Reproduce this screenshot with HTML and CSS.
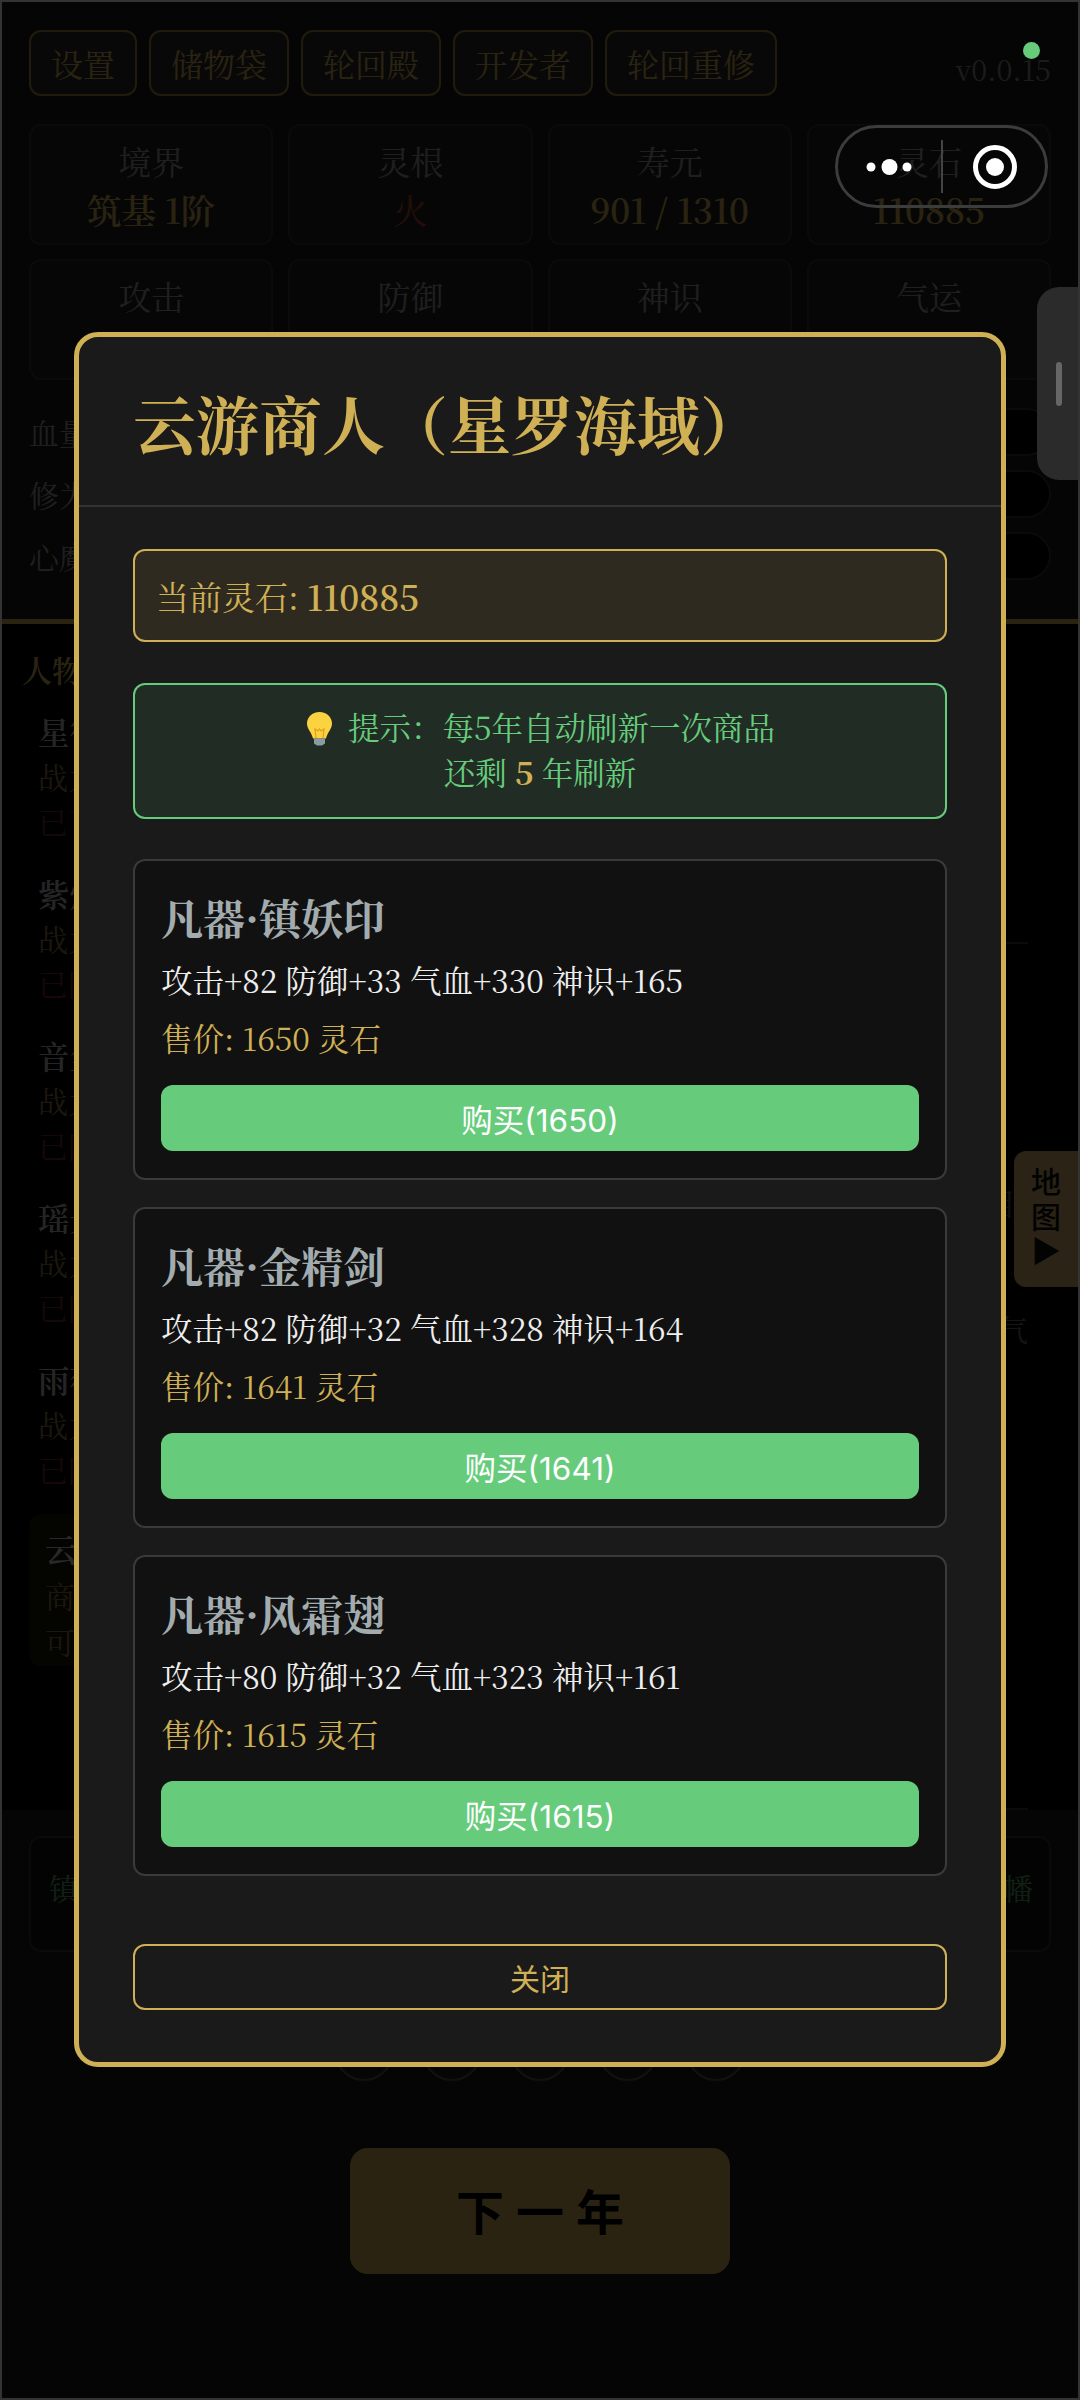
FILE: index.html
```html
<!doctype html>
<html lang="zh">
<head>
  <meta charset="utf-8">
  <title>修仙</title>
  <meta name="viewport" content="width=device-width, initial-scale=1">
  <link rel="stylesheet" href="styles.css">
</head>
<body>
<div class="frame">
  <div class="game">
    <div class="topbar">
      <div class="tabs">
        <button class="tab">设置</button>
        <button class="tab">储物袋</button>
        <button class="tab">轮回殿</button>
        <button class="tab">开发者</button>
        <button class="tab">轮回重修</button>
      </div>
      <span class="version">v0.0.15</span>
    </div>

    <div class="stats">
      <div class="stat"><span class="stat-label">境界</span><span class="stat-value">筑基 1阶</span></div>
      <div class="stat"><span class="stat-label">灵根</span><span class="stat-value fire">火</span></div>
      <div class="stat"><span class="stat-label">寿元</span><span class="stat-value">901 / 1310</span></div>
      <div class="stat"><span class="stat-label">灵石</span><span class="stat-value">110885</span></div>
      <div class="stat"><span class="stat-label">攻击</span><span class="stat-value">82</span></div>
      <div class="stat"><span class="stat-label">防御</span><span class="stat-value">33</span></div>
      <div class="stat"><span class="stat-label">神识</span><span class="stat-value">165</span></div>
      <div class="stat"><span class="stat-label">气运</span><span class="stat-value">12</span></div>
    </div>

    <div class="meters">
      <div class="meter"><span class="meter-label">血量</span><div class="meter-track"></div></div>
      <div class="meter"><span class="meter-label">修为</span><div class="meter-track"></div></div>
      <div class="meter"><span class="meter-label">心魔</span><div class="meter-track"></div></div>
    </div>

    <div class="main">
      <div class="people">
        <div class="people-title">人物</div>
        <div class="person"><div class="person-name">星衍</div><div class="person-info">战力 320</div><div class="person-dead">已飞升</div></div>
        <div class="person"><div class="person-name">紫烟</div><div class="person-info">战力 295</div><div class="person-dead">已陨落</div></div>
        <div class="person"><div class="person-name">音尘</div><div class="person-info">战力 274</div><div class="person-dead">已陨落</div></div>
        <div class="person"><div class="person-name">瑶光</div><div class="person-info">战力 260</div><div class="person-dead">已陨落</div></div>
        <div class="person"><div class="person-name">雨薇</div><div class="person-info">战力 248</div><div class="person-dead">已陨落</div></div>
        <div class="merchant">
          <div class="merchant-name">云游商人</div>
          <div class="merchant-line">商品</div>
          <div class="merchant-line">可购买</div>
        </div>
      </div>
      <div class="scene">
        <div class="scene-part first"></div>
        <div class="scene-part middle"><span class="scene-small">目</span><span class="scene-text">元气</span></div>
      </div>
    </div>

    <div class="slots">
      <span class="slot">镇</span>
      <span class="slot">幡</span>
    </div>

    <div class="dots">
      <span class="dot"></span><span class="dot"></span><span class="dot"></span><span class="dot"></span><span class="dot"></span>
    </div>

    <button class="next">下一年</button>
  </div>

  <div class="dim"></div>

  <div class="dock">
    <span class="dock-handle"></span>
  </div>
  <div class="map-tab">地<br>图<br>▶</div>
  <span class="online"></span>
  <div class="capsule">
    <svg class="capsule-more" width="70" height="30" viewBox="0 0 70 30"><circle cx="9" cy="15" r="4.5"/><circle cx="27.5" cy="15" r="8"/><circle cx="45" cy="15" r="4.5"/></svg>
    <span class="capsule-line"></span>
    <svg class="capsule-target" width="46" height="46" viewBox="0 0 46 46"><circle cx="23" cy="23" r="19.5" fill="none" stroke="#fff" stroke-width="5"/><circle cx="23" cy="23" r="9" fill="#fff"/></svg>
  </div>

  <div class="modal">
    <div class="modal-head">云游商人（星罗海域）</div>
    <div class="modal-body">
      <div class="balance">当前灵石: <strong>110885</strong></div>
      <div class="tip">
        <svg class="bulb" width="29" height="35" viewBox="0 0 29 35">
          <path d="M14.5 1C7 1 2 6.500 2 12.500c0 5.500 4.500 8.500 6 15h13c1.500-6.500 6-9.500 6-15C27 6.500 22 1 14.500 1z" fill="#fbd341"/>
          <path d="M11 27l-1-9 3 2 1.500-2 1.500 2 3-2-1 9" fill="none" stroke="#e79b1c" stroke-width="1.200"/>
          <path d="M9 27.500h11v5l-3 2h-5l-3-2z" fill="#8c9aa5"/>
        </svg>
        提示：每5年自动刷新一次商品<br>还剩 <b>5</b> 年刷新
      </div>
      <div class="goods">
        <div class="good">
          <div class="good-name">凡器·镇妖印</div>
          <div class="good-attrs">攻击+82 防御+33 气血+330 神识+165</div>
          <div class="good-price">售价: 1650 灵石</div>
          <button class="buy">购买(1650)</button>
        </div>
        <div class="good">
          <div class="good-name">凡器·金精剑</div>
          <div class="good-attrs">攻击+82 防御+32 气血+328 神识+164</div>
          <div class="good-price">售价: 1641 灵石</div>
          <button class="buy">购买(1641)</button>
        </div>
        <div class="good">
          <div class="good-name">凡器·风霜翅</div>
          <div class="good-attrs">攻击+80 防御+32 气血+323 神识+161</div>
          <div class="good-price">售价: 1615 灵石</div>
          <button class="buy">购买(1615)</button>
        </div>
      </div>
      <button class="close">关闭</button>
    </div>
  </div>
</div>
</body>
</html>
```

FILE: styles.css
```css
:root {
  --gold: #d0b055;
  --green: #66cc7c;
  --serif: "Noto Serif CJK SC", "Liberation Serif", serif;
  --sans: "Noto Sans CJK SC", sans-serif;
}
* { box-sizing: border-box; }
html, body { margin: 0; padding: 0; background: #000; }
button { font: inherit; cursor: pointer; }

.frame {
  position: relative;
  width: 1080px; height: 2400px;
  border: 2px solid #333;
  overflow: hidden;
  font-family: var(--serif);
}

/* page behind the dialog */
.game {
  height: 100%;
  background: #1a1a1a;
  padding: 28px 27px 0;
  color: #aaa;
}
.topbar { display: flex; justify-content: space-between; align-items: center; }
.tabs { display: flex; gap: 12px; }
.tab {
  height: 66px; padding: 0 20px;
  background: #2a2a2a; color: var(--gold);
  border: 2px solid rgba(201, 168, 76, 0.75); border-radius: 12px;
  font-size: 32px; font-family: var(--serif);
}
.version { font-size: 28.500px; color: #888; position: relative; top: 5px; }

.stats {
  display: grid; grid-template-columns: repeat(4, 1fr); gap: 14px 15px;
  margin-top: 28px;
}
.stat {
  height: 121px; padding-top: 12px;
  background: #222; border: 2px solid #333; border-radius: 12px;
  display: flex; flex-direction: column; align-items: center;
}
.stat-label { font-size: 33px; line-height: 46px; color: #999; }
.stat-value { font-size: 34.500px; line-height: 50px; font-weight: 600; color: var(--gold); }
.stat-value.fire { color: #b04530; font-weight: 400; }

.meters { margin-top: 28px; display: flex; flex-direction: column; gap: 14px; }
.meter { display: flex; align-items: center; gap: 12px; height: 48px; }
.meter-label { font-size: 30px; width: 90px; color: #999; }
.meter-track { flex: 1; height: 48px; border-radius: 24px; background: #000; border: 2px solid #333; }

.main {
  display: flex; margin: 39px -27px 0;
  border-top: 5px solid var(--gold);
  height: 1191px;
}
.people { width: 600px; padding: 22px 22px 0 20px; background: #000; }
.people-title { font-size: 30px; font-weight: 600; color: var(--gold); line-height: 46px; }
.person { height: 162px; padding: 18px 0 0 16px; font-size: 30px; line-height: 45px; }
.person-name { font-weight: 600; color: #bbb; font-size: 31.500px; line-height: 44px; }
.person-info { color: #8a7640; }
.person-dead { color: #6e2a2a; }
.merchant {
  margin: 12px 0 0 7px; height: 152px; padding: 12px 16px;
  background: rgba(201, 168, 76, 0.12); border-radius: 12px;
  font-size: 30px; line-height: 46px;
}
.merchant-name { font-weight: 600; color: #ccc; font-size: 31.500px; }
.merchant-line { color: #8a7640; }

.scene { flex: 1; background: #000; padding-right: 50px; text-align: right; }
.scene-part.first { height: 318px; }
.scene-part.middle {
  height: 868px; border-top: 2px solid #333; border-bottom: 2px solid #333;
  display: flex; flex-direction: column; align-items: flex-end;
  font-size: 30px; color: #666;
}
.scene-small { margin: 236px 12px 0 0; color: #555; }
.scene-text { margin-top: 82px; }

.slots {
  display: flex; justify-content: space-between; align-items: center;
  height: 116px; margin-top: 26px; padding: 0 16px 14px 18px;
  background: #111; border: 2px solid #333; border-radius: 12px;
  font-size: 30px; color: #55a066;
}
.dots { display: flex; justify-content: center; gap: 28px; margin-top: 69px; }
.dot { width: 60px; height: 60px; border-radius: 50%; border: 2px solid #555; background: #222; }
.next {
  display: block; width: 380px; height: 126px; margin: 67px auto 0; padding: 0 0 5px;
  background: var(--gold); color: #000;
  border: 0; border-radius: 18px;
  font-family: var(--sans); font-size: 48px; font-weight: 700;
  letter-spacing: 12px; text-indent: 12px;
}

.dim { position: absolute; inset: 0; background: rgba(0, 0, 0, 0.8); }

/* floating items above the dim layer */
.dock {
  position: absolute; left: 1035px; top: 285px; width: 50px; height: 193px;
  background: #2b2b2b; border-radius: 22px 0 0 22px;
}
.dock-handle {
  position: absolute; left: 19px; top: 75px;
  width: 6px; height: 44px; border-radius: 3px; background: #666;
}
.map-tab {
  position: absolute; left: 1012px; top: 1149px; width: 64px; height: 136px;
  padding-top: 15px;
  background: #2a2316; border-radius: 12px 0 0 12px;
  color: #030303; font-family: "Liberation Sans", var(--sans); font-size: 30px; font-weight: 500; line-height: 34.500px; text-align: center;
}
.online {
  position: absolute; left: 1021px; top: 40px;
  width: 17px; height: 17px; border-radius: 50%; background: var(--green);
}
.capsule {
  position: absolute; left: 833px; top: 123px; width: 213px; height: 83px;
  border: 3px solid #3c3c3c; border-radius: 42px;
}
.capsule-more { position: absolute; left: 24px; top: 24px; fill: #fff; }
.capsule-line { position: absolute; left: 103px; top: 12px; width: 2px; height: 53px; background: #444; }
.capsule-target { position: absolute; left: 134px; top: 16px; }

/* dialog */
.modal {
  position: absolute; left: 72px; top: 330px; width: 932px; height: 1735px;
  background: #1a1a1a; color: #eee;
  border: 5px solid var(--gold); border-radius: 24px;
}
.modal-head {
  height: 170px; padding-left: 54px;
  border-bottom: 2px solid #333;
  display: flex; align-items: center;
  font-size: 63px; font-weight: 700; color: var(--gold);
}
.modal-body { padding: 42px 54px 0; }
.balance {
  height: 93px; padding-left: 21px;
  display: flex; align-items: center; gap: 0.25em;
  background: #2e2a1f; border: 2px solid var(--gold); border-radius: 12px;
  font-size: 33px; color: var(--gold);
}
.balance strong { font-size: 34.500px; font-weight: 600; }
.tip {
  height: 136px; margin-top: 41px; padding-top: 19px;
  background: #212c25; border: 2px solid var(--green); border-radius: 12px;
  font-size: 31.500px; line-height: 45px; text-align: center; color: var(--green);
}
.tip b { color: var(--gold); }
.bulb { vertical-align: -6px; margin-right: 6px; }

.goods { margin-top: 40px; display: flex; flex-direction: column; gap: 27px; }
.good {
  height: 321px; padding: 26px;
  background: #111; border: 2px solid #3a3a3a; border-radius: 12px;
}
.good-name { font-size: 42px; line-height: 60px; font-weight: 700; color: #a2acaf; }
.good-attrs { font-size: 31.500px; line-height: 46px; margin-top: 10px; color: #eee; }
.good-price { font-size: 31.500px; line-height: 46px; margin-top: 12px; color: var(--gold); }
.buy {
  display: block; width: 100%; height: 66px; margin-top: 24px;
  background: var(--green); color: #fff;
  border: 0; border-radius: 12px;
  font-family: Inter, var(--sans); font-size: 31.500px;
}
.close {
  display: block; width: 100%; height: 66px; margin-top: 68px;
  background: transparent; color: var(--gold);
  border: 2px solid var(--gold); border-radius: 12px;
  font-family: var(--sans); font-size: 30px;
}
```
